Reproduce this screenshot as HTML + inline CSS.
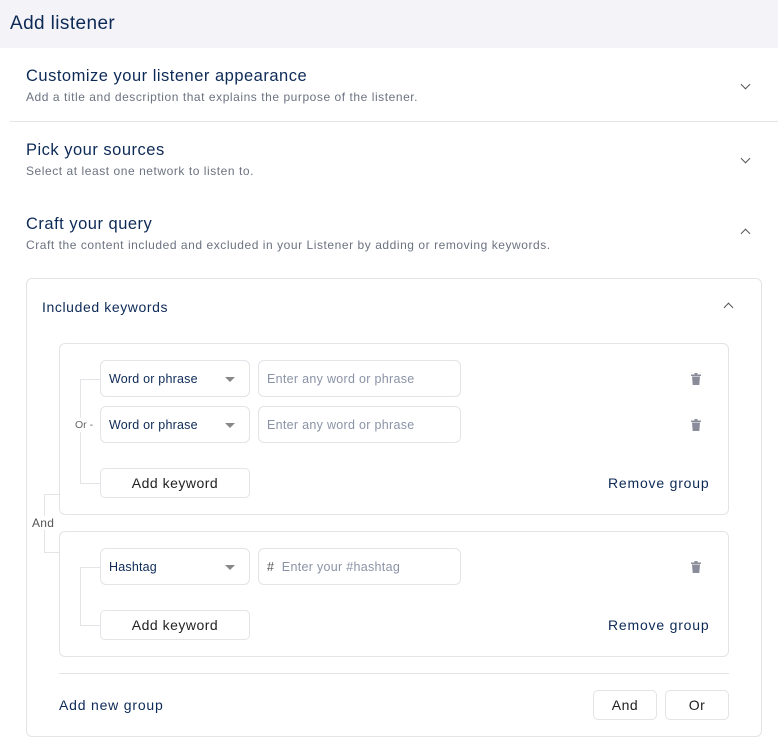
<!DOCTYPE html>
<html><head><style>
*{box-sizing:border-box;margin:0;padding:0}
body{width:778px;height:742px;background:#fff;font-family:"Liberation Sans",sans-serif;position:relative;overflow:hidden;color:#0d2a57}
.a{position:absolute}
.h{font-size:16.5px;color:#0d2a57;letter-spacing:0.5px}
.d{font-size:12px;color:#6b7280;letter-spacing:0.55px}
.chev{position:absolute;width:7px;height:7px;border-right:1.3px solid #555;border-bottom:1.3px solid #555}
.dn{transform:rotate(45deg)}
.up{transform:rotate(-135deg)}
.box{position:absolute;border:1px solid #e3e4e8;border-radius:6px;background:#fff}
.sel{position:absolute;width:150px;height:37px;border:1px solid #e3e4e8;border-radius:6px;font-size:12.5px;padding:11px 0 0 8px;color:#0d2a57;letter-spacing:0.2px}
.sel:after{content:"";position:absolute;right:14px;top:16px;border:5px solid transparent;border-top:5px solid #888;border-bottom:0}
.inp{position:absolute;width:203px;height:37px;border:1px solid #e3e4e8;border-radius:6px;font-size:12.5px;padding:11px 0 0 8px;color:#8a93a6;letter-spacing:0.3px}
.btn{position:absolute;height:30px;border:1px solid #e3e4e8;border-radius:5px;font-size:14px;text-align:center;line-height:28px;color:#222;letter-spacing:0.5px}
.trash{position:absolute;width:10px;height:12px}
.lnk{position:absolute;font-size:14px;color:#0d2a57;letter-spacing:0.8px}
.ln{position:absolute;background:#e3e4e8}
</style></head><body>
<div class="a" style="left:0;top:0;width:778px;height:48px;background:#f3f3f8"></div>
<div class="a" style="left:10px;top:13px;font-size:19px;color:#0d2a57;letter-spacing:0.4px">Add listener</div>

<div class="a h" style="left:26px;top:67px">Customize your listener appearance</div>
<div class="a d" style="left:26px;top:90px">Add a title and description that explains the purpose of the listener.</div>
<div class="chev dn" style="left:742px;top:81px"></div>
<div class="ln" style="left:10px;top:121px;width:768px;height:1px"></div>

<div class="a h" style="left:26px;top:141px">Pick your sources</div>
<div class="a d" style="left:26px;top:164px">Select at least one network to listen to.</div>
<div class="chev dn" style="left:742px;top:155px"></div>

<div class="a h" style="left:26px;top:215px">Craft your query</div>
<div class="a d" style="left:26px;top:238px">Craft the content included and excluded in your Listener by adding or removing keywords.</div>
<div class="chev up" style="left:742px;top:230px"></div>

<div class="box" style="left:26px;top:278px;width:736px;height:459px"></div>
<div class="a" style="left:42px;top:299px;font-size:14px;letter-spacing:0.6px">Included keywords</div>
<div class="chev up" style="left:725px;top:304px"></div>

<div class="ln" style="left:44px;top:494px;width:1px;height:58px"></div>
<div class="ln" style="left:44px;top:494px;width:16px;height:1px"></div>
<div class="ln" style="left:44px;top:552px;width:16px;height:1px"></div>
<div class="a" style="left:30px;top:516px;font-size:12px;color:#555;background:#fff;padding:0 2px;letter-spacing:0.3px">And</div>

<div class="box" style="left:59px;top:343px;width:670px;height:172px"></div>
<div class="ln" style="left:80px;top:379px;width:1px;height:104px"></div>
<div class="ln" style="left:80px;top:379px;width:20px;height:1px"></div>
<div class="ln" style="left:80px;top:483px;width:20px;height:1px"></div>
<div class="a" style="left:75px;top:418px;font-size:10.5px;color:#666;background:#fff;padding:1px 0">Or -</div>
<div class="sel" style="left:100px;top:360px">Word or phrase</div>
<div class="inp" style="left:258px;top:360px">Enter any word or phrase</div>
<div class="sel" style="left:100px;top:406px">Word or phrase</div>
<div class="inp" style="left:258px;top:406px">Enter any word or phrase</div>
<div class="btn" style="left:100px;top:468px;width:150px">Add keyword</div>
<div class="lnk" style="left:608px;top:475px">Remove group</div>

<div class="box" style="left:59px;top:531px;width:670px;height:126px"></div>
<div class="ln" style="left:80px;top:567px;width:1px;height:58px"></div>
<div class="ln" style="left:80px;top:567px;width:20px;height:1px"></div>
<div class="ln" style="left:80px;top:625px;width:20px;height:1px"></div>
<div class="sel" style="left:100px;top:548px">Hashtag</div>
<div class="inp" style="left:258px;top:548px"><span style="color:#555">#</span>&nbsp;&nbsp;Enter your #hashtag</div>
<div class="btn" style="left:100px;top:610px;width:150px">Add keyword</div>
<div class="lnk" style="left:608px;top:617px">Remove group</div>

<svg class="trash" style="left:691px;top:373px" viewBox="0 0 10 12"><rect x="0" y="1.5" width="10" height="1.5" fill="#8a8d99"/><rect x="3.5" y="0" width="3" height="2" fill="#8a8d99"/><path d="M1 3.5h8l-.7 8.5H1.7z" fill="#8a8d99"/></svg>
<svg class="trash" style="left:691px;top:419px" viewBox="0 0 10 12"><rect x="0" y="1.5" width="10" height="1.5" fill="#8a8d99"/><rect x="3.5" y="0" width="3" height="2" fill="#8a8d99"/><path d="M1 3.5h8l-.7 8.5H1.7z" fill="#8a8d99"/></svg>
<svg class="trash" style="left:691px;top:561px" viewBox="0 0 10 12"><rect x="0" y="1.5" width="10" height="1.5" fill="#8a8d99"/><rect x="3.5" y="0" width="3" height="2" fill="#8a8d99"/><path d="M1 3.5h8l-.7 8.5H1.7z" fill="#8a8d99"/></svg>

<div class="ln" style="left:59px;top:673px;width:670px;height:1px"></div>
<div class="lnk" style="left:59px;top:697px">Add new group</div>
<div class="btn" style="left:593px;top:690px;width:64px">And</div>
<div class="btn" style="left:665px;top:690px;width:64px">Or</div>
</body></html>
